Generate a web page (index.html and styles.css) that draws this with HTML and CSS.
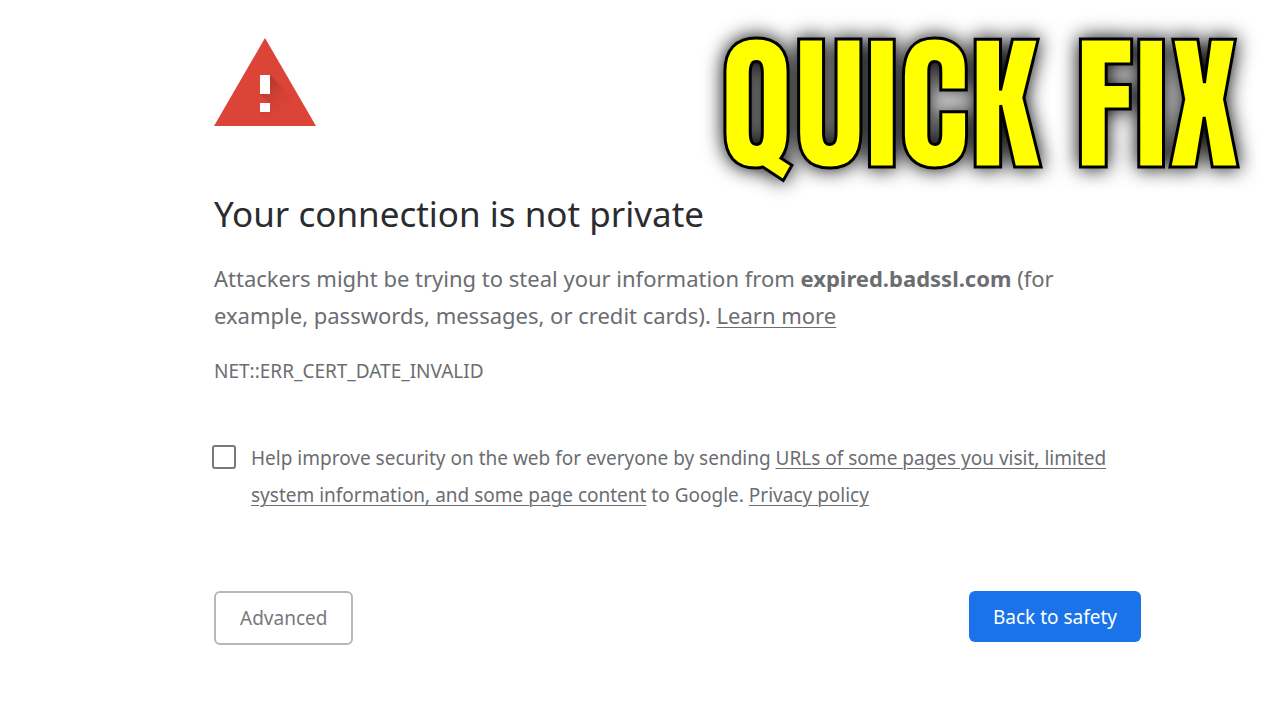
FILE: index.html
```html
<!DOCTYPE html>
<html lang="en">
<head>
    <meta charset="UTF-8">
    <meta name="viewport" content="width=device-width, initial-scale=1.0">
    <title>Privacy error</title>
    <link rel="stylesheet" href="styles.css">
</head>
<body>
    <div class="banner">QUICK FIX</div>

    <main class="interstitial">
        <svg class="warning-icon" viewBox="0 0 102 88" aria-hidden="true">
            <defs>
                <linearGradient id="iconShadow" gradientUnits="userSpaceOnUse" x1="50" y1="48" x2="76" y2="74">
                    <stop offset="0" stop-color="#a93228" stop-opacity="0.7"/>
                    <stop offset="1" stop-color="#db4437" stop-opacity="0"/>
                </linearGradient>
            </defs>
            <path d="M51 0 102 88H0z" fill="#db4437"/>
            <path d="M56 37 86 67 98 88H60L46 74V65h9l-9-9z" fill="url(#iconShadow)"/>
            <path d="M46 37h10v19H46zM46 65h10v9H46z" fill="#fff"/>
        </svg>

        <h1>Your connection is not private</h1>
        <p class="message">Attackers might be trying to steal your information from <strong>expired.badssl.com</strong> (for<br>
            example, passwords, messages, or credit cards). <a href="#">Learn more</a></p>
        <p class="error-code">NET::ERR_CERT_DATE_INVALID</p>

        <div class="opt-in">
            <input type="checkbox" id="optIn">
            <label for="optIn">Help improve security on the web for everyone by sending <a href="#">URLs of some pages you visit, limited<br>
                system information, and some page content</a> to Google. <a href="#">Privacy policy</a></label>
        </div>

        <div class="buttons">
            <button class="advanced-button" type="button">Advanced</button>
            <button class="safety-button" type="button">Back to safety</button>
        </div>
    </main>
</body>
</html>
```
FILE: styles.css
```css
* {
    box-sizing: border-box;
}
body {
    margin: 0;
    background-color: #fff;
    color: #6b6d71;
    font-family: "Segoe UI", "Noto Sans", sans-serif;
}
.interstitial {
    padding: 38px 139px 0 214px;
}
.warning-icon {
    display: block;
    width: 102px;
    height: 88px;
}
h1 {
    margin: 64px 0 0;
    color: #2b2c30;
    font-size: 35px;
    font-weight: 400;
    line-height: 48px;
}
p {
    margin: 0;
    white-space: nowrap;
}
a {
    color: inherit;
    text-decoration-thickness: 1px;
    text-underline-offset: 3px;
}
.message {
    margin-top: 22px;
    font-size: 22px;
    line-height: 37px;
}
.error-code {
    margin-top: 19px;
    font-size: 19px;
    line-height: 37px;
}
.opt-in {
    display: flex;
    gap: 15px;
    margin-top: 50px;
    font-size: 19px;
    line-height: 37px;
    white-space: nowrap;
}
.opt-in input {
    appearance: none;
    flex: none;
    width: 24px;
    height: 24px;
    margin: 5px 0 0 -2px;
    border: 2px solid #77797d;
    border-radius: 3px;
    background-color: #fff;
}
.opt-in input:checked {
    background-color: #1a73e8;
}
.buttons {
    display: flex;
    justify-content: space-between;
    align-items: flex-start;
    margin-top: 77px;
}
button {
    padding: 0 24px;
    border: none;
    border-radius: 6px;
    font-family: inherit;
    font-size: 19px;
    cursor: pointer;
}
.advanced-button {
    height: 54px;
    border: 2px solid #b4b7bb;
    background-color: #fff;
    color: #77797d;
}
.safety-button {
    height: 51px;
    background-color: #1a73e8;
    color: #fff;
}
.banner {
    position: absolute;
    top: 0;
    right: 40px;
    color: #ff0;
    font-family: Anton, Impact, "Liberation Sans Narrow", sans-serif;
    font-size: 149px;
    font-weight: 400;
    line-height: 208px;
    white-space: nowrap;
    -webkit-text-stroke: 3px #000;
    filter: drop-shadow(0 0 10px #000);
}
```
